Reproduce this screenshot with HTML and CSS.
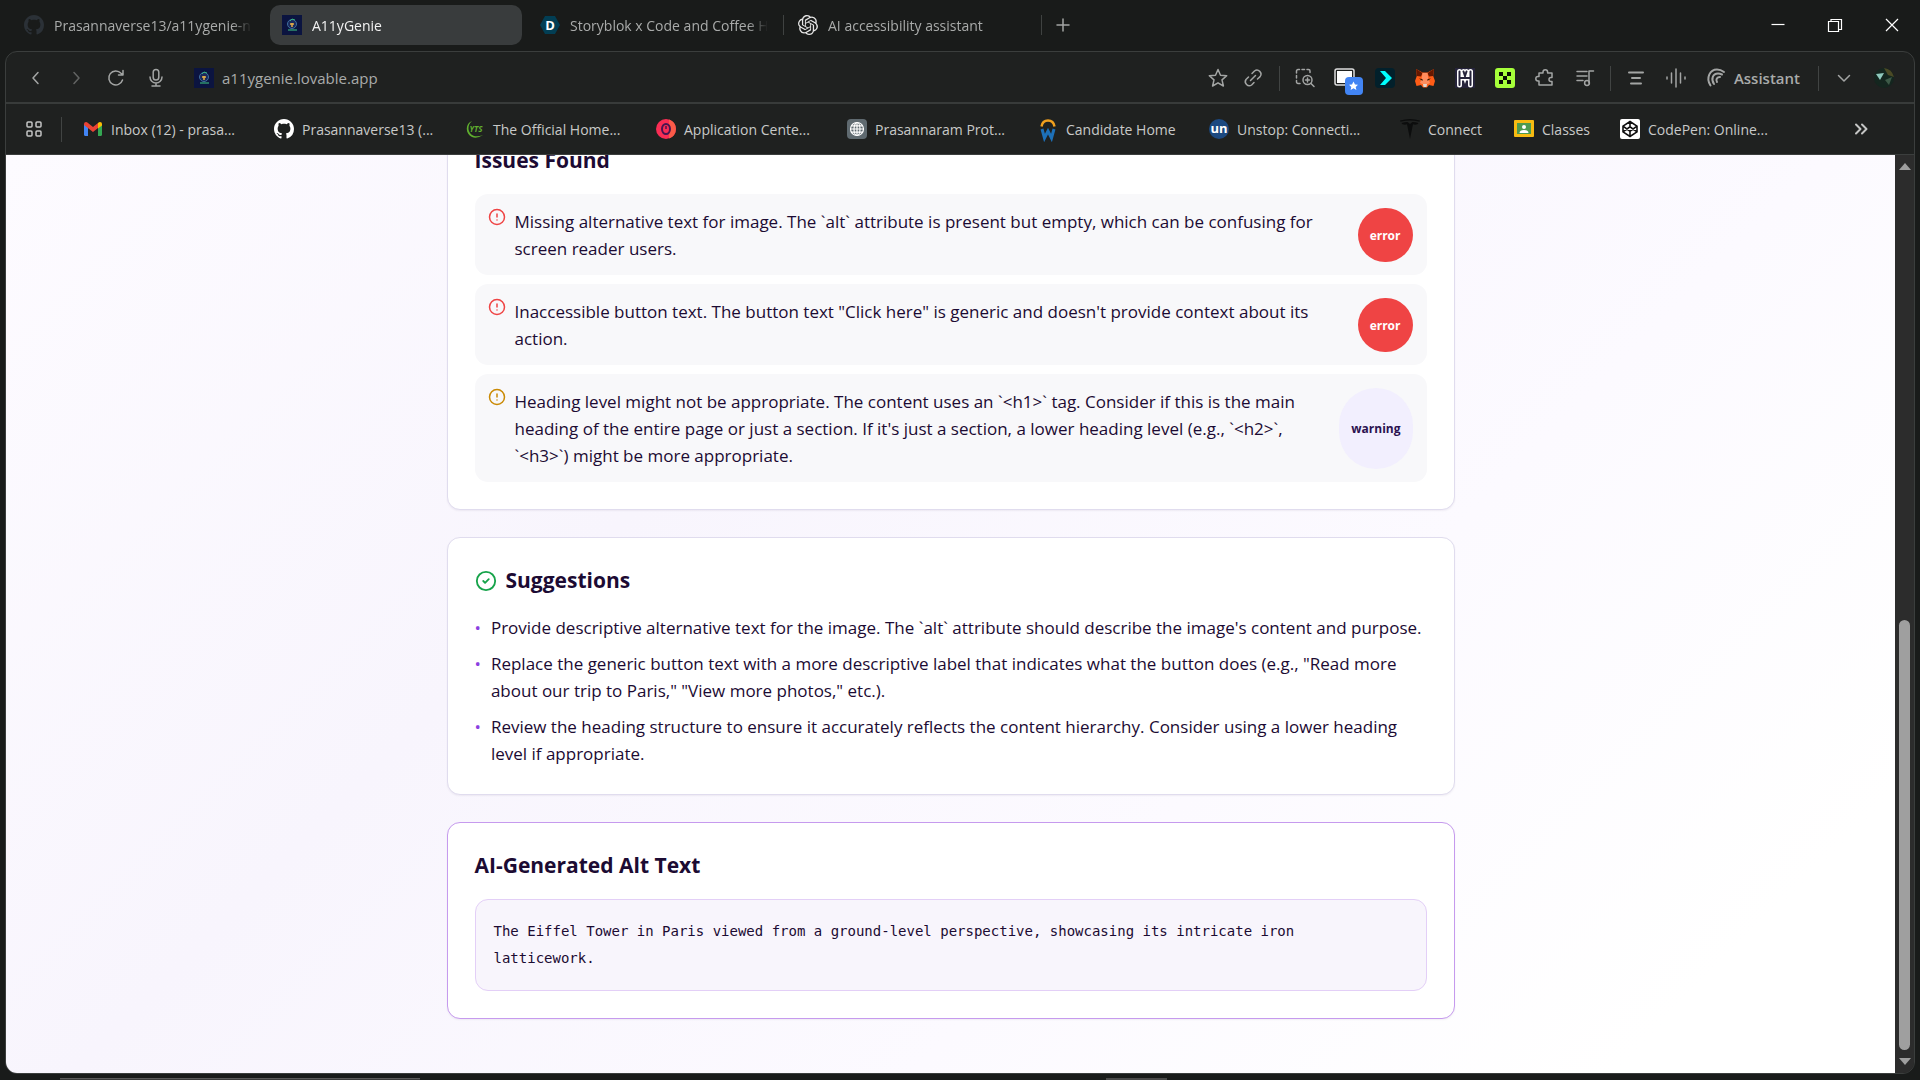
FILE: index.html
```html
<!DOCTYPE html>
<html lang="en">
<head>
<meta charset="utf-8">
<title>A11yGenie</title>
<link rel="stylesheet" href="styles.css">
</head>
<body>
<svg class="defs" aria-hidden="true">
  <symbol id="github" viewBox="0 0 16 16"><path d="M8 0C3.58 0 0 3.58 0 8c0 3.54 2.29 6.53 5.47 7.59.4.07.55-.17.55-.38 0-.19-.01-.82-.01-1.49-2.01.37-2.53-.49-2.69-.94-.09-.23-.48-.94-.82-1.13-.28-.15-.68-.52-.01-.53.63-.01 1.08.58 1.23.82.72 1.21 1.87.87 2.33.66.07-.52.28-.87.51-1.07-1.78-.2-3.64-.89-3.64-3.95 0-.87.31-1.59.82-2.15-.08-.2-.36-1.02.08-2.12 0 0 .67-.21 2.2.82.64-.18 1.32-.27 2-.27s1.36.09 2 .27c1.53-1.04 2.2-.82 2.2-.82.44 1.1.16 1.92.08 2.12.51.56.82 1.27.82 2.15 0 3.07-1.87 3.75-3.65 3.95.29.25.54.73.54 1.48 0 1.07-.01 1.93-.01 2.2 0 .21.15.46.55.38A8.01 8.01 0 0 0 16 8c0-4.42-3.58-8-8-8z"/></symbol>
  <symbol id="genie" viewBox="0 0 20 20"><rect width="20" height="20" fill="#0b1440"/><circle cx="10" cy="9" r="4.500" fill="#1b2a5c" stroke="#3f6fa0"/><path d="M8 6l2-2 3 1" fill="none" stroke="#36b37e"/><path d="M8 9h4M10 8v4" stroke="#e8b04a" stroke-width="1.500"/><path d="M6 15h9" stroke="#2f8f6e" stroke-width="1.500"/></symbol>
  <symbol id="alert" viewBox="0 0 24 24"><circle cx="12" cy="12" r="10"/><path d="M12 8v4M12 16h.01"/></symbol>
</svg>

<header class="tabs" role="tablist">
  <button class="tab" role="tab"><svg class="ic dim"><use href="#github"/></svg><span class="tab-label">Prasannaverse13/a11ygenie-n</span></button>
  <span class="sep"></span>
  <button class="tab active" role="tab" aria-selected="true"><svg class="ic"><use href="#genie"/></svg><span class="tab-label">A11yGenie</span></button>
  <span class="sep"></span>
  <button class="tab" role="tab"><svg class="ic" viewBox="0 0 20 20"><path d="M5 1h10l5 9-5 9H5l-5-9z" fill="#023e54"/><text x="10" y="15" text-anchor="middle" class="logo-d">D</text></svg><span class="tab-label">Storyblok x Code and Coffee H</span></button>
  <span class="sep line"></span>
  <button class="tab" role="tab"><svg class="ic" viewBox="0 0 24 24" fill="#e6e6e6"><path d="M22.282 9.821a5.985 5.985 0 0 0-.516-4.910 6.046 6.046 0 0 0-6.510-2.900A6.065 6.065 0 0 0 4.981 4.180a5.985 5.985 0 0 0-3.998 2.900 6.046 6.046 0 0 0 .743 7.097 5.980 5.980 0 0 0 .510 4.911 6.051 6.051 0 0 0 6.515 2.900A5.985 5.985 0 0 0 13.260 24a6.056 6.056 0 0 0 5.772-4.206 5.990 5.990 0 0 0 3.997-2.900 6.056 6.056 0 0 0-.747-7.073zM13.260 22.430a4.476 4.476 0 0 1-2.876-1.040l.141-.081 4.779-2.758a.795.795 0 0 0 .392-.681v-6.737l2.020 1.168a.071.071 0 0 1 .038.052v5.583a4.504 4.504 0 0 1-4.494 4.494zM3.600 18.304a4.470 4.470 0 0 1-.535-3.014l.142.085 4.783 2.759a.771.771 0 0 0 .780 0l5.843-3.369v2.332a.080.080 0 0 1-.033.062L9.740 19.950a4.500 4.500 0 0 1-6.140-1.646zM2.340 7.896a4.485 4.485 0 0 1 2.366-1.973V11.600a.766.766 0 0 0 .388.676l5.815 3.355-2.020 1.168a.076.076 0 0 1-.071 0l-4.830-2.786A4.504 4.504 0 0 1 2.340 7.872zm16.597 3.855l-5.833-3.387L15.119 7.200a.076.076 0 0 1 .071 0l4.830 2.791a4.494 4.494 0 0 1-.676 8.105v-5.678a.790.790 0 0 0-.407-.667zm2.010-3.023l-.141-.085-4.774-2.782a.776.776 0 0 0-.785 0L9.409 9.230V6.897a.066.066 0 0 1 .028-.061l4.830-2.787a4.500 4.500 0 0 1 6.680 4.660zm-12.640 4.135l-2.020-1.164a.080.080 0 0 1-.038-.057V6.075a4.500 4.500 0 0 1 7.375-3.453l-.142.080L8.704 5.460a.795.795 0 0 0-.393.681zm1.097-2.365l2.602-1.500 2.607 1.500v2.999l-2.597 1.500-2.607-1.500z"/></svg><span class="tab-label">AI accessibility assistant</span></button>
  <span class="sep line"></span>
  <button class="new-tab" aria-label="New tab"><svg class="ic line-ic" viewBox="0 0 20 20"><path d="M10 4v12M4 10h12"/></svg></button>
  <div class="win-controls">
    <button aria-label="Minimize"><svg class="ic white" viewBox="0 0 20 20"><path d="M3.500 9.500h13"/></svg></button>
    <button aria-label="Restore"><svg class="ic white" viewBox="0 0 20 20"><path d="M3.500 6.500h10v10h-10zM6 6.500v-2h10.500v10H14"/></svg></button>
    <button aria-label="Close"><svg class="ic white" viewBox="0 0 20 20"><path d="M4 4l12 12M16 4L4 16"/></svg></button>
  </div>
</header>

<div class="window">
  <nav class="toolbar">
    <button class="tool" aria-label="Back"><svg class="ic line-ic" viewBox="0 0 20 20"><path d="M12 4.500L7 10l5 5.500"/></svg></button>
    <button class="tool faded" aria-label="Forward"><svg class="ic line-ic" viewBox="0 0 20 20"><path d="M8 4.500l5 5.500-5 5.500"/></svg></button>
    <button class="tool" aria-label="Reload"><svg class="ic line-ic" viewBox="0 0 20 20"><path d="M16.500 12A7 7 0 1 1 15 5.200L17 7M17 2.500V7h-4.500"/></svg></button>
    <button class="tool" aria-label="Voice"><svg class="ic line-ic" viewBox="0 0 20 20"><rect x="7.200" y="1.500" width="5.600" height="10.500" rx="2.800"/><path d="M4 9a6 6 0 0 0 12 0M10 15v3M6 18h8"/></svg></button>
    <form class="address"><svg class="ic"><use href="#genie"/></svg><input type="text" aria-label="Address" value="a11ygenie.lovable.app"></form>
    <button class="tool slim" aria-label="Bookmark"><svg class="ic line-ic" viewBox="0 0 20 20"><path d="M10 1.500l2.500 5.700 6.200.6-4.700 4.100 1.400 6.100L10 14.800 4.600 18 6 11.900 1.300 7.800l6.200-.6z"/></svg></button>
    <button class="tool slim" aria-label="Copy link"><svg class="ic line-ic" viewBox="0 0 20 20"><path d="M7.500 12.500l5-5M9 5.500l2.500-2.500a4 4 0 0 1 5.600 5.600L14.500 11M5.500 9L3 11.500A4 4 0 0 0 8.600 17l2.400-2.500"/></svg></button>
    <span class="rule after-link"></span>
    <button class="tool" aria-label="Search region"><svg class="ic line-ic" viewBox="0 0 20 20"><path d="M1.500 5V3a1.500 1.500 0 0 1 1.500-1.500h1.500M7 1.500h2.500M12 1.500h1.500A1.500 1.500 0 0 1 15 3v1.500M1.500 7.500V10M1.500 12.500V14A1.500 1.500 0 0 0 3 15.500h2"/><circle cx="12.500" cy="12" r="4.500"/><path d="M16 15.500l3 3M12.500 10v4M10.500 12h4"/></svg></button>
    <button class="tool" aria-label="Screen bookmark"><svg class="ic wide" viewBox="0 0 30 30"><rect x="5" y="6" width="19" height="16" rx="2" fill="#1f2120" stroke="#ddd" stroke-width="1.500"/><rect x="7" y="8" width="15" height="12" fill="#fff"/><rect x="15" y="14" width="18" height="18" rx="4" fill="#4285f4"/><path d="M23.500 18.500l1.500 3 3 .3-2.300 2.100.7 3.100-2.900-1.700-2.900 1.700.7-3.100-2.300-2.100 3-.3z" fill="#fff"/></svg></button>
    <button class="tool" aria-label="Teal extension"><svg class="ic" viewBox="0 0 20 20"><rect width="20" height="20" rx="4" fill="#02202b"/><path d="M5 3h5l7 7-7 7H5l6-7z" fill="#0ff"/></svg></button>
    <button class="tool" aria-label="Wallet"><svg class="ic" viewBox="0 0 20 20"><path d="M1 1l6.500 3.500h5L19 1l-.8 7L20 13l-1.500 5-4.500-1-2 2.500H8L6 17l-4.500 1L0 13l1.800-5z" fill="#ff5c16"/><path d="M1 1l6.500 4L6 8.500 1.800 8zM19 1l-6.500 4L14 8.500l4.200-.5z" fill="#661800"/><path d="M7.500 5h5l1 6 1.500 4-2 1H7l-2-1 1.500-4z" fill="#ff8d5d"/><path d="M4 10.500l3.500.5v2zM16 10.500l-3.500.5v2z" fill="#391800"/><path d="M8 16h4l-.5 3h-3z" fill="#e3d6cb"/></svg></button>
    <button class="tool" aria-label="H extension"><svg class="ic" viewBox="0 0 20 20"><rect width="20" height="20" fill="#25233a"/><g fill="none" stroke="#fff" stroke-width="5" stroke-linecap="round"><path d="M4.500 3.500V17M15.500 3.500V17M4.500 10h11M8.500 3.500L10 8l1.500-4.500"/></g><g fill="none" stroke="#25233a" stroke-width="2" stroke-linecap="round"><path d="M4.500 3.500V17M15.500 3.500V17M4.500 10h11M8.500 3.500L10 8l1.500-4.500"/></g></svg></button>
    <button class="tool" aria-label="Green extension"><svg class="ic" viewBox="0 0 20 20"><rect width="20" height="20" rx="3" fill="#a6ff3a"/><path d="M4 4h4v4H4zM12 4h4v4h-4zM8 8h4v4H8zM4 12h4v4H4zM12 12h4v4h-4z" fill="#0a0f05"/></svg></button>
    <button class="tool" aria-label="Extensions"><svg class="ic line-ic" viewBox="0 0 20 20"><path d="M4 5h4V4a2.300 2.300 0 0 1 4.600 0v1H17v4.500h-1a2 2 0 0 0 0 4h1V17H4v-4H3a2.200 2.200 0 0 1 0-4.400h1z"/></svg></button>
    <button class="tool" aria-label="Playlist"><svg class="ic line-ic" viewBox="0 0 20 20"><path d="M2 3.500h10M2 8h10M2 12.500h6M14 15V3h4.500"/><circle cx="12" cy="15" r="2.400"/></svg></button>
    <span class="rule"></span>
    <button class="tool" aria-label="Summary"><svg class="ic line-ic thick" viewBox="0 0 20 20"><path d="M3 4.500h14M6 10h8M5 15.500h10"/></svg></button>
    <button class="tool" aria-label="Audio"><svg class="ic line-ic" viewBox="0 0 20 20"><path d="M1 9v2M5.500 5v10M10 1v18M14.500 5v10M19 9v2"/></svg></button>
    <button class="assistant"><svg class="ic line-ic thick" viewBox="0 0 20 20"><path d="M4.500 17.500C-.5 10 4 1.500 11 1.500c3 0 5 1 7 2.500M8 16C4.500 11 7 5.500 12 5.500c2 0 3 .5 4 1M11 14c-1.500-2.500 0-5 3-5"/></svg>Assistant</button>
    <span class="rule before-menu"></span>
    <button class="tool" aria-label="More"><svg class="ic line-ic" viewBox="0 0 20 20"><path d="M4.500 7.500L10 13l5.500-5.500"/></svg></button>
    <button class="tool" aria-label="Profile"><svg class="ic" viewBox="0 0 20 20"><circle cx="10" cy="10" r="10" fill="#14261f"/><path d="M2 6l8-1-4 7z" fill="#8fc9bd"/><path d="M10 0q8 1 10 9l-6-2z" fill="#4b4a25"/><path d="M11 12l7-3-3 8z" fill="#3d5a48"/></svg></button>
  </nav>

  <nav class="bookmarks">
    <button class="grid-btn" aria-label="All bookmarks"><svg class="ic line-ic light" viewBox="0 0 20 20"><rect x="3" y="3" width="5" height="5" rx="1"/><rect x="12" y="3" width="5" height="5" rx="1"/><rect x="3" y="12" width="5" height="5" rx="1"/><rect x="12" y="12" width="5" height="5" rx="1"/></svg></button>
    <span class="rule"></span>
    <div class="links">
      <a href="#"><svg class="ic" viewBox="0 0 20 20"><path d="M1 5h4v12H2.500A1.500 1.500 0 0 1 1 15.500z" fill="#4285f4"/><path d="M15 5h4v10.500a1.500 1.500 0 0 1-1.500 1.500H15z" fill="#34a853"/><path d="M1 5q0-2 2-2 1 0 2 1l5 4 5-4v5l-5 4-9-7z" fill="#ea4335"/><path d="M15 4q1-1 2-1 2 0 2 2v1.500L15 9.500z" fill="#fbbc04"/></svg>Inbox (12) - prasa...</a>
      <a href="#"><svg class="ic lit"><use href="#github"/></svg>Prasannaverse13 (...</a>
      <a href="#"><svg class="ic" viewBox="0 0 20 20"><path d="M7 2C0 4 0 15 7 18q5 2 11-2-5 2-9 1C2 14 2 6 7 2z" fill="#5fae2e"/><text x="11" y="13" text-anchor="middle" class="logo-yts">YTS</text></svg>The Official Home...</a>
      <a href="#"><svg class="ic" viewBox="0 0 20 20"><circle cx="10" cy="10" r="10" fill="#fa2d54"/><path d="M13 0.500a10 10 0 0 1 0 19z" fill="#fb5a48"/><ellipse cx="10" cy="10" rx="4" ry="5" fill="none" stroke="#4a1550" stroke-width="2"/><path d="M10 7v3" stroke="#4a1550" stroke-width="1.500"/></svg>Application Cente...</a>
      <a href="#"><svg class="ic" viewBox="0 0 20 20"><rect width="20" height="20" rx="4" fill="#5f6a70"/><g fill="none" stroke="#fff" stroke-width="1.200"><circle cx="10" cy="10" r="6.500"/><ellipse cx="10" cy="10" rx="3" ry="6.500"/><path d="M3.500 10h13M4.500 6.800h11M4.500 13.200h11M10 3.500v13"/></g></svg>Prasannaram Prot...</a>
      <a href="#"><svg class="ic" viewBox="0 0 20 20" fill="none"><path d="M3.500 7.500q1-6 6.500-6t6.500 6" stroke="#f0a01e" stroke-width="2.500"/><path d="M4 10l2.500 9L10 12l3.500 7L16 10" stroke="#1d70b8" stroke-width="3"/></svg>Candidate Home</a>
      <a href="#"><svg class="ic" viewBox="0 0 20 20"><circle cx="10" cy="10" r="10" fill="#1c4980"/><text x="10" y="14" text-anchor="middle" class="logo-un">un</text></svg>Unstop: Connecti...</a>
      <a href="#"><svg class="ic" viewBox="0 0 20 20"><path d="M0 1.500q10-3 20 0l-.5 1.300Q10 0 .5 2.800zM1.500 4q3-1 6-1L10 5l2.500-2q3 0 6 1-.5 1.800-3.500 1.800l-2-.6L10 20 7 5.200l-2 .6Q2 5.800 1.500 4z" fill="#0c0d0d"/></svg>Connect</a>
      <a href="#"><svg class="ic" viewBox="0 0 20 20"><rect y="1" width="20" height="17" rx="1" fill="#f7bb12"/><rect x="3" y="4" width="14" height="11" fill="#4c9a4f"/><circle cx="10" cy="8" r="2" fill="#fff"/><path d="M5.500 14q0-3 4.500-3t4.500 3z" fill="#fff"/></svg>Classes</a>
      <a href="#"><svg class="ic" viewBox="0 0 20 20"><rect width="20" height="20" rx="2" fill="#fff"/><path d="M10 2.500l7 4.700v5.600l-7 4.700-7-4.700V7.200zM3 7.200l7 5 7-5M3 12.800l7-5 7 5M10 2.500v5.300M10 12.200v5.300" fill="none" stroke="#111" stroke-width="1.600"/></svg>CodePen: Online...</a>
    </div>
    <button class="more" aria-label="More bookmarks"><svg class="ic line-ic light thick" viewBox="0 0 20 20"><path d="M5 5.500L9.500 10 5 14.500M11 5.500l4.500 4.500-4.500 4.500"/></svg></button>
  </nav>

  <div class="viewport">
    <main class="page">
      <section class="card">
        <h2>Issues Found</h2>
        <ul class="issues">
          <li class="issue"><svg class="mark red"><use href="#alert"/></svg><p>Missing alternative text for image. The `alt` attribute is present but empty, which can be confusing for screen reader users.</p><span class="badge error">error</span></li>
          <li class="issue"><svg class="mark red"><use href="#alert"/></svg><p>Inaccessible button text. The button text "Click here" is generic and doesn't provide context about its action.</p><span class="badge error">error</span></li>
          <li class="issue"><svg class="mark amber"><use href="#alert"/></svg><p>Heading level might not be appropriate. The content uses an `&lt;h1&gt;` tag. Consider if this is the main heading of the entire page or just a section. If it's just a section, a lower heading level (e.g., `&lt;h2&gt;`, `&lt;h3&gt;`) might be more appropriate.</p><span class="badge warning">warning</span></li>
        </ul>
      </section>

      <section class="card">
        <h2><svg class="check" viewBox="0 0 24 24"><circle cx="12" cy="12" r="10"/><path d="M9 12l2 2 4-4"/></svg>Suggestions</h2>
        <ul class="suggestions">
          <li><p>Provide descriptive alternative text for the image. The `alt` attribute should describe the image's content and purpose.</p></li>
          <li><p>Replace the generic button text with a more descriptive label that indicates what the button does (e.g., "Read more about our trip to Paris," "View more photos," etc.).</p></li>
          <li><p>Review the heading structure to ensure it accurately reflects the content hierarchy. Consider using a lower heading level if appropriate.</p></li>
        </ul>
      </section>

      <section class="card accent">
        <h2>AI-Generated Alt Text</h2>
        <p class="alt-text">The Eiffel Tower in Paris viewed from a ground-level perspective, showcasing its intricate iron<br>latticework.</p>
      </section>
    </main>
    <div class="scrollbar" aria-hidden="true">
      <span class="arrow up"></span>
      <span class="above"></span>
      <span class="thumb"></span>
      <span class="arrow down"></span>
    </div>
  </div>
</div>
<footer class="desk"><span class="strip"></span><span class="pill"></span></footer>
</body>
</html>
```
FILE: styles.css
```css
* { box-sizing: border-box; }
body {
  margin: 0;
  height: 100vh;
  overflow: hidden;
  display: flex;
  flex-direction: column;
  background: #191b1a;
  color: #1c0b33;
  font-family: "Open Sans", "Noto Sans", sans-serif;
  font-size: 17px;
}
button {
  border: 0;
  padding: 0;
  background: none;
  color: inherit;
  font: inherit;
  display: flex;
  align-items: center;
  justify-content: center;
}
ul { list-style: none; margin: 0; padding: 0; }
p { margin: 0; }
.defs { display: none; }
.ic { width: 20px; height: 20px; flex: none; overflow: visible; }
.line-ic, .white { fill: none; stroke: #a3a5a4; stroke-width: 1.5; stroke-linecap: round; stroke-linejoin: round; }
.line-ic.light { stroke: #c4c5c4; }
.line-ic.thick { stroke-width: 2; }
.white { stroke: #fff; stroke-width: 1.2; stroke-linecap: butt; stroke-linejoin: miter; }
.dim { fill: #2b3137; }
.lit { fill: #fff; }
.wide { width: 30px; height: 30px; }
.logo-d { font-size: 13px; font-weight: 700; fill: #fff; }
.logo-yts { font-size: 8px; font-weight: 700; font-style: italic; fill: #5fae2e; }
.logo-un { font-size: 13px; font-weight: 700; fill: #fff; }

/* Tab strip */
.tabs { flex: none; height: 51px; padding: 5px 0 6px 12px; display: flex; align-items: center; font-size: 14px; color: #a9abaa; }
.tab { flex: 0 1 252px; min-width: 0; height: 40px; padding: 0 12px; gap: 10px; justify-content: flex-start; border-radius: 10px; }
.tab.active { background: #393c3d; color: #f2f2f2; }
.tab-label { flex: 1; text-align: left; overflow: hidden; white-space: nowrap; mask-image: linear-gradient(90deg, #000 90%, transparent); }
.sep { width: 6px; height: 20px; display: flex; justify-content: center; }
.sep.line::before { content: ""; width: 1px; background: #3f4241; }
.new-tab { width: 38px; height: 40px; }
.win-controls { margin-left: auto; display: flex; }
.win-controls button { width: 57px; height: 40px; }

/* Browser window */
.window { flex: 1; min-height: 0; margin: 0 5px; border: 1px solid #3b3e3d; border-radius: 12px; overflow: hidden; display: flex; flex-direction: column; background: #1f2120; }
.toolbar { flex: none; height: 52px; padding: 2px 10px 0; display: flex; align-items: center; border-bottom: 2px solid #383b3a; color: #a9abaa; }
.tool { width: 40px; height: 40px; flex: none; }
.tool.slim { width: 35px; }
.tool.faded { opacity: .5; }
.address { flex: 1; margin-left: 18px; display: flex; align-items: center; gap: 8px; }
.address input { flex: 1; min-width: 0; border: 0; padding: 0; background: none; color: #a9abaa; font: inherit; font-size: 15px; outline: 0; }
.rule { flex: none; width: 1px; height: 25px; margin: 0 5px; background: #414443; }
.rule.after-link, .rule.before-menu { margin-left: 8px; }
.assistant { min-width: 114px; height: 40px; padding: 0 10px; gap: 8px; justify-content: flex-start; font-size: 15px; font-weight: 600; }
.bookmarks { flex: none; height: 51px; padding: 0 10px; display: flex; align-items: center; border-bottom: 1px solid #3b3e3d; font-size: 14px; color: #c8c9c8; }
.grid-btn { width: 36px; height: 40px; }
.bookmarks .rule { margin: 0 5px 0 9px; }
.links { flex: 1; display: grid; grid-template-columns: repeat(5, 191px) 171px 191px 114px 106px 191px; }
.links a { display: flex; align-items: center; gap: 8px; padding: 0 0 0 16px; color: inherit; text-decoration: none; white-space: nowrap; }
.more { width: 40px; height: 40px; margin-right: 23px; }

/* Page */
.viewport { flex: 1; min-height: 0; display: flex; }
.page {
  flex: 1;
  min-width: 0;
  overflow: hidden;
  padding: 0 27px 54px;
  display: flex;
  flex-direction: column;
  justify-content: flex-end;
  align-items: center;
  gap: 27px;
  background: linear-gradient(135deg, #fdfbff 0%, #f8f5fd 35%, #fcfaff 65%, #fff 90%);
}
.card { flex: none; width: 100%; max-width: 1008px; padding: 27px; border: 1px solid #e0dcee; border-radius: 13px; background: #fff; box-shadow: 0 1px 2px rgba(30, 10, 60, .06); }
.card.accent { border-color: #c69aee; }
h2 { margin: 0 0 18px; display: flex; align-items: center; gap: 9px; font-size: 21px; line-height: 31px; font-weight: 700; }
.issues, .suggestions { display: flex; flex-direction: column; gap: 9px; line-height: 27px; }
.issue { display: flex; gap: 9px; padding: 14px 14px 13px 13px; border-radius: 13px; background: #f8f8fa; }
.issue p { flex: 1; }
.mark, .check { flex: none; fill: none; stroke-width: 2; stroke-linecap: round; stroke-linejoin: round; }
.mark { width: 18px; height: 18px; }
.red { stroke: #ef4444; }
.amber { stroke: #ca8a04; }
.check { width: 22px; height: 22px; stroke: #16a34a; }
.badge { flex: none; display: flex; align-items: center; padding: 0 12px; border-radius: 999px; font-size: 12px; font-weight: 700; }
.badge.error { background: #ef4444; color: #fff; }
.badge.warning { background: #f2effe; color: #2c1250; }
.suggestions li { display: flex; gap: 10px; }
.suggestions li::before { content: "•"; color: #8b3fe0; }
.alt-text { padding: 18px; border: 1px solid #e3cff7; border-radius: 13px; background: #f8f5fc; font-family: "DejaVu Sans Mono", monospace; font-size: 14px; line-height: 27px; }

.scrollbar { flex: none; width: 19px; padding: 8px 0; display: flex; flex-direction: column; align-items: center; gap: 8px; background: #2c2c2c; }
.arrow { border: 6px solid transparent; }
.arrow.up { border-top: 0; border-bottom: 7px solid #9f9f9f; }
.arrow.down { border-bottom: 0; border-top: 7px solid #9f9f9f; }
.above { flex: 434; }
.thumb { flex: 430; width: 11px; border-radius: 6px; background: #9f9f9f; }

.desk { flex: none; height: 6px; padding-top: 4px; display: flex; }
.strip { width: 360px; margin-left: 60px; background: #3a3a3a; border-top: 1px solid #5a5a5a; }
.pill { width: 61px; margin-left: 686px; background: #4a4a4a; }
```
